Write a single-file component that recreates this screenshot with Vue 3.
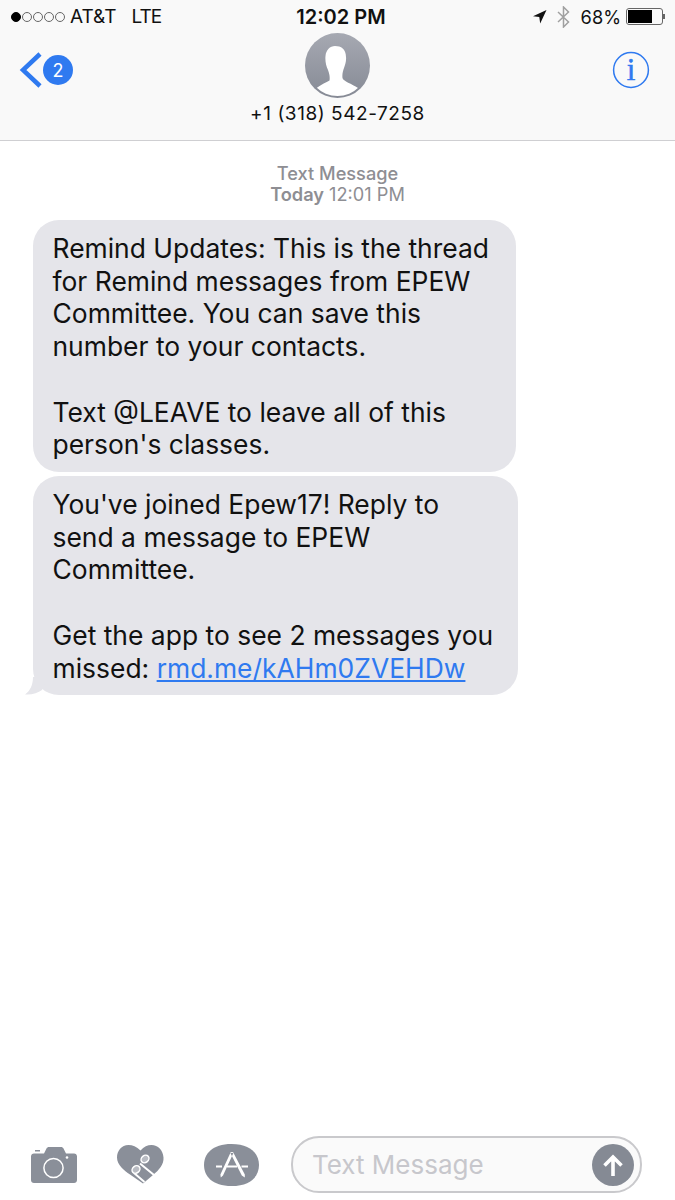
<script setup>
const dots = [1, 0, 0, 0, 0]
</script>

<template>
  <div class="screen">
    <header class="head">
      <div class="status">
        <div class="status-left">
          <span class="dots">
            <i v-for="(d, n) in dots" :key="n" :class="['dot', { on: d }]"></i>
          </span>
          <span class="carrier">AT&amp;T</span>
          <span class="net">LTE</span>
        </div>
        <div class="clock">12:02 PM</div>
        <div class="status-right">
          <svg class="loc" width="15" height="15" viewBox="0 0 15 15"><path d="M14.500 1 1 7.200l6.300.9.9 6.400z" fill="#111"/></svg>
          <svg class="bt" width="13" height="22" viewBox="0 0 13 22"><path d="M1 6l10.500 10L6.500 21V1L11.500 6 1 16" fill="none" stroke="#a0a0a0" stroke-width="1.500"/></svg>
          <span class="pct">68%</span>
          <span class="batt"><span class="batt-fill"></span></span>
          <span class="nub"></span>
        </div>
      </div>
      <div class="nav">
        <div class="back">
          <svg width="24" height="36" viewBox="0 0 24 36"><path d="M21 2 4 18l17 16" fill="none" stroke="#2f7af0" stroke-width="4.500"/></svg>
          <span class="badge">2</span>
        </div>
        <div class="contact">
          <svg class="avatar" width="65" height="65" viewBox="0 0 65 65">
            <defs>
              <linearGradient id="av" x1="0" y1="0" x2="0" y2="1"><stop offset="0" stop-color="#a6a9b2"/><stop offset="1" stop-color="#868a95"/></linearGradient>
              <clipPath id="avc"><circle cx="32.500" cy="32.500" r="30.500"/></clipPath>
            </defs>
            <circle cx="32.500" cy="32.500" r="32.500" fill="url(#av)"/>
            <path clip-path="url(#avc)" d="M30 13c6 0 11 3 11 11 .5 4-1 8-2 11-1 3-2 6-1.500 10 .5 3 9.500 6 15.500 10l3 3 2 12H8l1.500-13c3.500-4 10.500-7 15-9.500.5-3.500 0-6.500-1.500-10.500-2-4-3-9-2.500-14 .5-6 4.500-10 9.500-10z" fill="#fff"/>
          </svg>
          <div class="phone">+1 (318) 542-7258</div>
        </div>
        <svg class="info" width="38" height="38" viewBox="0 0 38 38">
          <circle cx="19" cy="19" r="17.400" fill="none" stroke="#2f7af0" stroke-width="1.500"/>
          <text x="19" y="29" text-anchor="middle" class="info-i">i</text>
        </svg>
      </div>
    </header>

    <main class="thread">
      <div class="stamp">
        <div class="stamp-kind">Text Message</div>
        <div><b>Today</b> 12:01 PM</div>
      </div>
      <div class="bubble first">
        Remind Updates: This is the thread<br>for Remind messages from EPEW<br>Committee. You can save this<br>number to your contacts.<br><br>Text @LEAVE to leave all of this<br>person's classes.
      </div>
      <div class="bubble second">
        You've joined Epew17! Reply to<br>send a message to EPEW<br>Committee.<br><br>Get the app to see 2 messages you<br>missed: <a class="link">rmd.me/kAHm0ZVEHDw</a>
        <svg class="tail" width="24" height="18" viewBox="0 0 24 18"><path d="M8 0C8 8 5 14 0 17.500 7 18 13 16 17 13L24 0z" fill="#e5e5ea"/></svg>
      </div>
    </main>

    <footer class="composer">
      <svg width="46" height="36" viewBox="0 0 46 36">
        <path d="M3 6.500H13L15.500 1.500C16 .5 17 0 18 0H30C31 0 32 .5 32.500 1.500L35 6.500H43C44.700 6.500 46 7.800 46 9.500V33C46 34.700 44.700 36 43 36H3C1.300 36 0 34.700 0 33V9.500C0 7.800 1.300 6.500 3 6.500z" fill="#8a8f99"/>
        <rect x="4" y="3" width="5" height="1.500" fill="#8a8f99"/>
        <circle cx="22.500" cy="21" r="9.600" fill="none" stroke="#fff" stroke-width="1.500"/>
        <circle cx="36" cy="10.500" r="1.300" fill="#fff"/>
      </svg>
      <svg class="heart" width="47" height="39" viewBox="0 0 47 39">
        <path d="M23.500 5.500C19.500 1.500 15.500 0 11.500 0 4.500 0 0 6 0 12.500 0 20 7 25.500 13 29.500L26 38.500 36 30C42 25 47 19.500 46.500 12.500 46 5 41 0 34.500 0c-4 0-7.500 1.500-11 5.500z" fill="#8a8f99"/>
        <path d="M23 18.500 37 30M17 28 27.500 37" stroke="#fff" stroke-width="2" fill="none"/>
        <ellipse cx="28" cy="14" rx="4.200" ry="3.500" transform="rotate(-40 28 14)" fill="#b9bcc3" stroke="#fff" stroke-width="1.500"/>
        <ellipse cx="19" cy="24.500" rx="4.200" ry="3.500" transform="rotate(-40 19 24.500)" fill="#b9bcc3" stroke="#fff" stroke-width="1.500"/>
      </svg>
      <svg class="store" width="55" height="42" viewBox="0 0 55 42">
        <path d="M27.500 0C47 0 55 10 55 21S47 42 27.500 42 0 32 0 21 8 0 27.500 0z" fill="#8a8f99"/>
        <path d="M26.800 8 29.300 9.300 19 31.500 16.800 33.500 16.400 30.500zM29 8 26.500 9.300 37.800 31.500 40.800 33.500 40.800 30.500z" fill="#fff"/>
        <path d="M12 22.500h6M23 22.500h10M37.500 22.500h6.500" stroke="#fff" stroke-width="1.800" fill="none"/>
      </svg>
      <div class="field">
        <span class="placeholder">Text Message</span>
        <span class="send">
          <svg width="24" height="26" viewBox="0 0 24 26"><path d="M12 24V5M3.500 13.500 12 5l8.500 8.500" fill="none" stroke="#fff" stroke-width="3.600"/></svg>
        </span>
      </div>
    </footer>
  </div>
</template>

<style scoped>
.screen {
  width: 675px;
  height: 1200px;
  display: flex;
  flex-direction: column;
  background: #fff;
  color: #111;
  font-family: Inter, "Liberation Sans", sans-serif;
  overflow: hidden;
}
.head {
  height: 141px;
  box-sizing: border-box;
  background: #f9f9f9;
  border-bottom: 1px solid #cfcfd2;
}
.status {
  height: 33px;
  display: grid;
  grid-template-columns: 1fr auto 1fr;
  align-items: center;
  padding: 0 10px 0 11px;
  font-size: 19px;
}
.status-left { display: flex; align-items: center; }
.dots { display: flex; gap: 1px; margin-right: 5px; }
.dot {
  width: 10px;
  height: 10px;
  box-sizing: border-box;
  border: 1px solid #666;
  border-radius: 50%;
}
.dot.on { background: #000; border-color: #000; }
.net { margin-left: 15px; letter-spacing: -1px; }
.clock { font-weight: 600; font-size: 20px; margin-left: 6px; }
.status-right { display: flex; align-items: center; justify-content: flex-end; }
.loc { margin-right: 10px; }
.bt { margin-right: 11px; }
.pct { margin-right: 5px; font-size: 18.200px; }
.batt {
  width: 37px;
  height: 17px;
  box-sizing: border-box;
  border: 1px solid #666;
  border-radius: 3px;
  padding: 1px;
  display: flex;
}
.batt-fill { width: 24px; background: #000; }
.nub { width: 2px; height: 5px; background: #666; }
.nav {
  display: grid;
  grid-template-columns: 1fr auto 1fr;
  padding: 0 20px;
}
.back { display: flex; align-items: flex-start; padding-top: 19px; margin-left: -1px; }
.badge {
  width: 30px;
  height: 30px;
  margin: 3px 0 0 0;
  border-radius: 50%;
  background: #2f7af0;
  color: #fff;
  font-size: 18px;
  display: flex;
  align-items: center;
  justify-content: center;
}
.contact { display: flex; flex-direction: column; align-items: center; }
.avatar { display: block; }
.phone { margin-top: 3px; font-size: 19px; line-height: 26px; letter-spacing: .55px; }
.info { justify-self: end; margin: 18px 5px 0 0; }
.info-i {
  font-family: "Liberation Serif", serif;
  font-size: 31px;
  fill: #2f7af0;
  stroke: #2f7af0;
  stroke-width: .5px;
}
.thread {
  flex: 1;
  padding-left: 33px;
  display: flex;
  flex-direction: column;
  align-items: flex-start;
}
.stamp {
  align-self: stretch;
  margin: 22px 0 15px -33px;
  text-align: center;
  color: #8e8e93;
  font-size: 18.200px;
  line-height: 21px;
}
.stamp-kind { font-weight: 500; }
.stamp b { font-weight: 600; }
.bubble {
  position: relative;
  box-sizing: border-box;
  background: #e5e5ea;
  border-radius: 26px;
  padding: 12px 0 9px 19.500px;
  font-size: 26.450px;
  line-height: 32.700px;
  white-space: nowrap;
}
.first { width: 483px; height: 252px; }
.second { width: 485px; height: 219px; margin-top: 4px; }
.link { color: #2f7af0; text-decoration: underline; }
.tail { position: absolute; left: -8px; bottom: 0; }
.composer {
  height: 80px;
  box-sizing: border-box;
  padding: 9px 33px 0 31px;
  display: flex;
  align-items: center;
}
.heart { margin-left: 40px; }
.store { margin-left: 40px; }
.field {
  margin-left: 32px;
  width: 351px;
  height: 57px;
  box-sizing: border-box;
  border: 2px solid #c9c9cc;
  border-radius: 28px;
  background: #fafafa;
  display: flex;
  align-items: center;
  justify-content: space-between;
  padding: 0 6px 0 19px;
}
.placeholder { color: #c7c7cc; font-size: 26px; }
.send {
  width: 42px;
  height: 42px;
  border-radius: 50%;
  background: #858a94;
  display: flex;
  align-items: center;
  justify-content: center;
}
</style>
